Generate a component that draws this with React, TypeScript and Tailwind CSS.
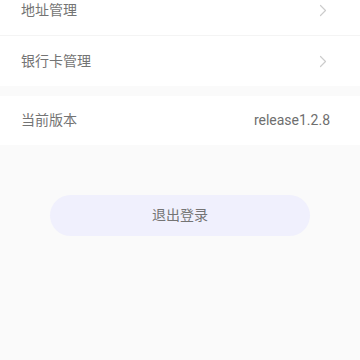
import React from "react";

const Chevron = () => (
  <svg width="8" height="13" viewBox="0 0 8 13" fill="none">
    <path d="M1.5 1.5 L6.5 6.5 L1.5 11.5" stroke="#cccccc" strokeWidth="1.2" strokeLinecap="round" strokeLinejoin="round" />
  </svg>
);

export default function App() {
  return (
    <div
      className="w-[360px] h-[360px] overflow-hidden bg-[#fafafa]"
      style={{ fontFamily: '"Roboto", "Noto Sans CJK SC", sans-serif' }}
    >
      <div className="bg-white -mt-[14px]">
        <div className="h-[50px] flex items-center justify-between pl-[21px] pr-[33px] border-b border-[#f4f4f4]">
          <span className="text-[14px] text-[#747474]">地址管理</span>
          <Chevron />
        </div>
        <div className="h-[50px] flex items-center justify-between pl-[21px] pr-[33px]">
          <span className="text-[14px] text-[#747474]">银行卡管理</span>
          <Chevron />
        </div>
      </div>
      <div className="h-[10px]" />
      <div className="bg-white h-[49px] flex items-center justify-between pl-[21px] pr-[30px]">
        <span className="text-[14px] text-[#747474]">当前版本</span>
        <span className="text-[14px] text-[#6e6e6e]">release1.2.8</span>
      </div>
      <div className="flex justify-center pt-[50px]">
        <div className="w-[260px] h-[41px] rounded-full bg-[#f0f0fd] flex items-center justify-center">
          <span className="text-[14px] text-[#747474]">退出登录</span>
        </div>
      </div>
    </div>
  );
}
